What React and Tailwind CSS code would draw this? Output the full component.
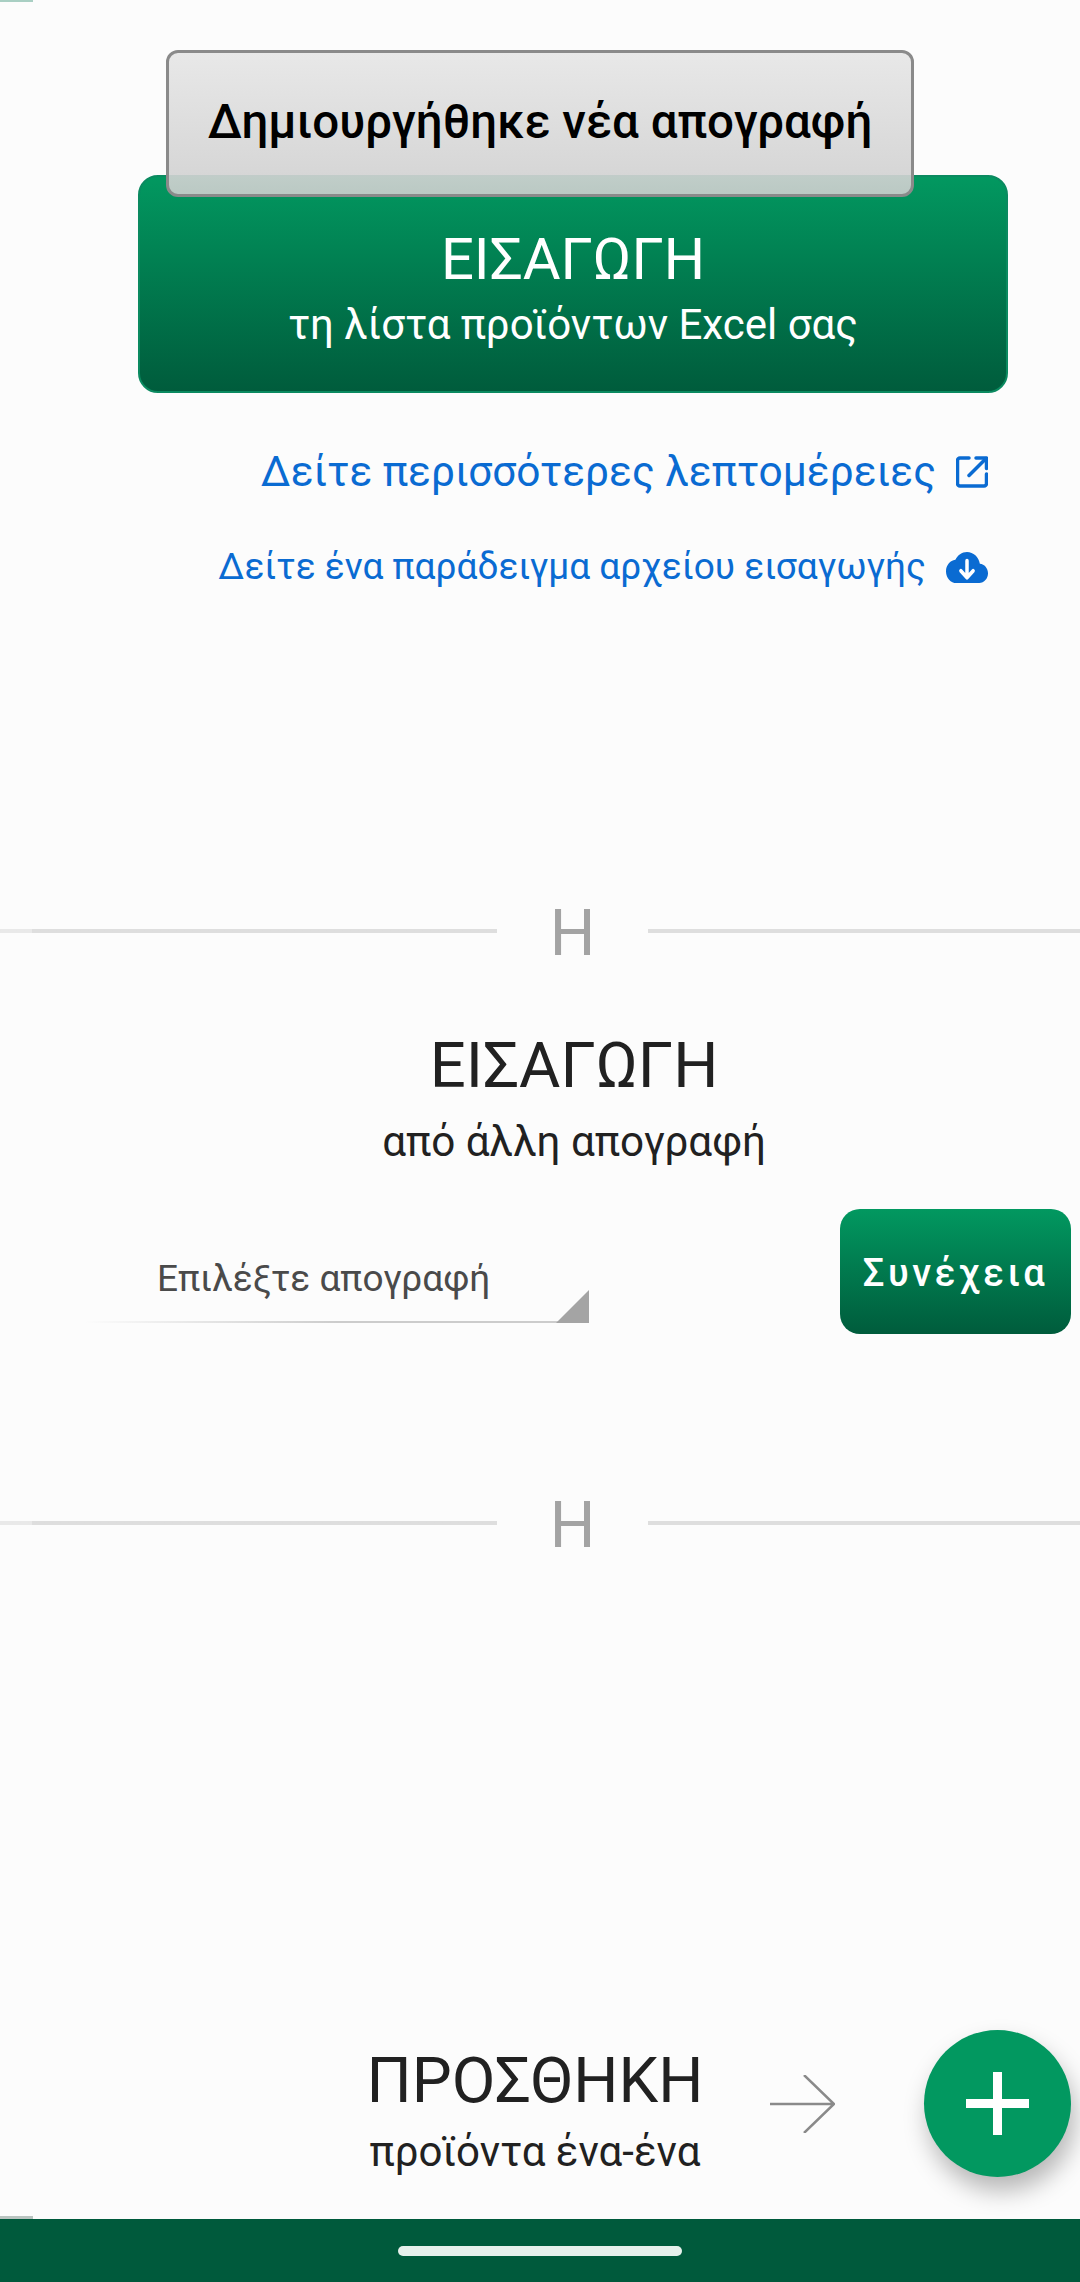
import React from "react";

function ExternalIcon() {
  return (
    <svg viewBox="0 0 32 32" className="h-8 w-8" fill="none" stroke="#0a6bd2" strokeWidth="3.500" strokeLinecap="round" strokeLinejoin="round">
      <path d="M13 2H4a2.5 2.5 0 0 0-2.5 2.5v23A2.5 2.5 0 0 0 4 30h24a2.5 2.5 0 0 0 2.5-2.5V18" />
      <path d="M20 2h10.5v10.5" />
      <path d="M30 2.500 13 19.500" />
    </svg>
  );
}

function CloudIcon() {
  return (
    <svg viewBox="0 0 24 17" preserveAspectRatio="none" className="h-[33px] w-[42px]">
      <path
        fill="#0a6bd2"
        d="M19.35 6.540C18.670 3.090 15.640 .5 12 .5 9.110 .5 6.600 2.140 5.350 4.540 2.340 4.860 0 7.410 0 10.500c0 3.310 2.690 6 6 6h13c2.760 0 5-2.240 5-5 0-2.640-2.050-4.780-4.650-4.960z"
      />
      <path d="M12 5v8.500M8.500 10.200 12 13.700l3.500-3.500" fill="none" stroke="#fff" strokeWidth="2" strokeLinecap="round" strokeLinejoin="round" />
    </svg>
  );
}

function Divider() {
  return (
    <div className="flex h-[60px] items-center">
      <div className="h-1 w-[497px] bg-linear-to-r from-[#e9e9e9] from-[32px] to-[#dedede] to-[32px]"></div>
      <div className="flex-1 pt-[6px] text-center text-[64px] leading-[60px] text-[#a3a3a3]">Η</div>
      <div className="h-1 w-[432px] bg-[#dedede]"></div>
    </div>
  );
}

export default function App() {
  return (
    <div className="relative flex h-[2282px] w-[1080px] flex-col overflow-hidden bg-[#fcfcfc] font-['Roboto',sans-serif]">
      {/* small marks on the left edge */}
      <div className="absolute left-0 top-0 h-[2px] w-[33px] bg-[#a9cfc3]"></div>
      <div className="absolute left-0 top-[2216px] h-[3px] w-[33px] bg-[#b9c4c0]"></div>

      {/* Toast */}
      <div className="absolute left-[166px] top-[50px] z-10 flex h-[147px] w-[748px] items-center justify-center rounded-xl border-[3px] border-[#8a8a8a] bg-linear-to-b from-[#e8e8e8] to-[#cfcfcf]/90 pb-[1px] text-[47.500px] font-medium text-black">
        Δημιουργήθηκε νέα απογραφή
      </div>

      <main className="flex-1">
        {/* Excel import */}
        <button className="ml-[138px] mt-[175px] flex h-[218px] w-[870px] flex-col items-center justify-center rounded-[20px] border-2 border-[#0b8a60] bg-linear-to-b from-[#029860] to-[#005c3c] text-white">
          <span className="mt-[8px] block h-[73px] text-[58px] leading-[70px]">ΕΙΣΑΓΩΓΗ</span>
          <span className="block h-[56px] text-[42px] leading-[56px]">τη λίστα προϊόντων Excel σας</span>
        </button>

        <div className="mt-[49px] flex h-[60px] items-center justify-end gap-[20px] pr-[92px] text-[42.400px] text-[#0a6bd2]">
          <span>Δείτε περισσότερες λεπτομέρειες</span>
          <ExternalIcon />
        </div>
        <div className="mt-[35px] flex h-[60px] items-center justify-end gap-[20px] pr-[92px] text-[37px] text-[#0a6bd2]">
          <span>Δείτε ένα παράδειγμα αρχείου εισαγωγής</span>
          <CloudIcon />
        </div>

        <div className="mt-[304px]">
          <Divider />
        </div>

        <div className="mt-[69px] h-[70px] pl-[68px] text-center text-[63.400px] leading-[70px] text-[#212121]">ΕΙΣΑΓΩΓΗ</div>
        <div className="mt-[17px] h-[50px] pl-[68px] text-center text-[42.200px] leading-[50px] text-[#212121]">από άλλη απογραφή</div>

        {/* Select + continue */}
        <div className="mt-[42px] flex h-[125px] items-start">
          <div className="relative ml-[85px] mt-[40px] h-[74px] w-[504px] bg-linear-to-r from-transparent to-[#cccccc] to-50% bg-[length:100%_2px] bg-bottom bg-no-repeat pl-[72px] text-[37px] leading-[60px] text-[#4a4a4a]">
            Επιλέξτε απογραφή
            <svg viewBox="0 0 33 33" className="absolute bottom-0 right-0 h-[33px] w-[33px]">
              <path d="M33 0v33H0z" fill="#a4a4a4" />
            </svg>
          </div>
          <button className="ml-auto mr-[9px] flex h-[125px] w-[231px] items-center justify-center rounded-[20px] bg-linear-to-b from-[#029860] to-[#005c3c] pt-[3px] text-[38px] font-medium tracking-[3.500px] text-white">
            Συνέχεια
          </button>
        </div>

        <div className="mt-[159px]">
          <Divider />
        </div>

        {/* Add one by one */}
        <div className="mt-[477px] flex items-start pl-[370px]">
          <div className="w-[330px] whitespace-nowrap pt-[15px] text-center text-[#212121]">
            <div className="-mx-2 h-[70px] text-[63.400px] leading-[70px]">ΠΡΟΣΘΗΚΗ</div>
            <div className="-mx-2 mt-[12px] h-[50px] text-[42px] leading-[50px]">προϊόντα ένα-ένα</div>
          </div>
          <svg viewBox="0 0 65 58" className="ml-[70px] mt-[45px] h-[58px] w-[65px]" fill="none" stroke="#8a8a8a" strokeWidth="2.500">
            <path d="M0 29h64M34 0l30 29-30 29" />
          </svg>
          <button className="ml-[89px] flex h-[147px] w-[147px] items-center justify-center rounded-full bg-[#029860] shadow-[4px_14px_24px_rgba(0,0,0,0.28)]">
            <svg viewBox="0 0 63 63" className="h-[63px] w-[63px]">
              <path d="M27 0h9v27h27v9H36v27h-9V36H0v-9h27z" fill="#fff" />
            </svg>
          </button>
        </div>
      </main>

      {/* Bottom bar */}
      <div className="flex h-[63px] items-start justify-center bg-[#005a3c] pt-[27px]">
        <div className="h-[10px] w-[284px] rounded-full bg-[#e6f0ec]"></div>
      </div>
    </div>
  );
}
